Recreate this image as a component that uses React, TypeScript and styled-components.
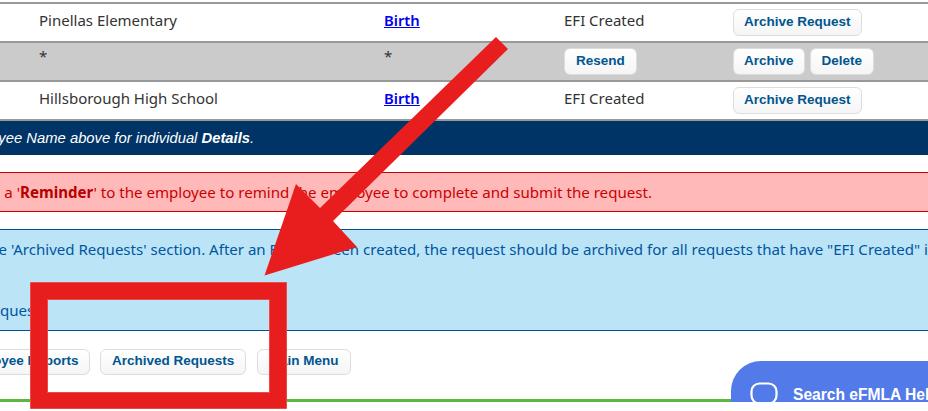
import styled, { createGlobalStyle } from "styled-components";

const GlobalStyle = createGlobalStyle`
  html, body {
    margin: 0;
    padding: 0;
    background: #fff;
    overflow: hidden;
  }
`;

const Viewport = styled.div`
  position: relative;
  width: 928px;
  height: 402px;
  overflow: hidden;
  background: #fff;
  font-family: "Noto Sans", "Open Sans", sans-serif;
  font-size: 15px;
  color: #333;
`;

// the page is scrolled sideways in the picture, so everything starts left of the window
const Page = styled.div`
  width: 1400px;
  margin-left: -200px;
  padding-top: 2px;
`;

const Table = styled.div`
  border-top: 2px solid #999;
`;

const Row = styled.div<{ $shaded?: boolean }>`
  display: grid;
  grid-template-columns: 584px 180px 169px 1fr;
  align-items: center;
  height: 37px;
  border-bottom: 2px solid #999;
  background: ${(props) => (props.$shaded ? "#cbcbcb" : "#fff")};
`;

const NameCell = styled.div`
  padding-left: 239px;
  margin-top: -5px;
`;

const Cell = styled.div`
  margin-top: -5px;
`;

const Star = styled.div`
  margin-top: -6px;
`;

const ActionCell = styled.div`
  display: flex;
  gap: 5px;
`;

const BirthLink = styled.a`
  color: #0000ee;
  font-size: 14.8px;
  font-weight: 600;
  text-decoration: underline;
`;

const Button = styled.button<{ $short?: boolean }>`
  height: 27px;
  padding: 0 ${(props) => (props.$short ? "11px" : "10px")} 3px;
  border: 1px solid #ddd;
  border-radius: 6px;
  background: linear-gradient(#fff, #f5f5f5);
  color: #00568f;
  font-family: "Liberation Sans", Arial, sans-serif;
  font-size: 13.5px;
  font-weight: bold;
  white-space: nowrap;
`;

const Banner = styled.div`
  height: 34px;
  margin-bottom: 17px;
  padding-left: 75px;
  display: flex;
  align-items: center;
  background: #003466;
  color: #fff;
  font-family: "Liberation Sans", Arial, sans-serif;
  font-size: 14.8px;
  font-style: italic;
  white-space: nowrap;
`;

const ReminderBox = styled.div`
  height: 38px;
  margin-bottom: 17px;
  padding-left: 48px;
  display: flex;
  align-items: center;
  border-top: 1px solid #cc0000;
  border-bottom: 1px solid #cc0000;
  background: #ffb9b9;
  color: #cc0000;
  font-size: 15.1px;
  white-space: nowrap;

  strong {
    font-weight: 700;
    color: #b80000;
  }
`;

const ArchiveBox = styled.div`
  height: 91px;
  margin-bottom: 18px;
  padding-top: 9px;
  border-top: 1px solid #00519b;
  border-bottom: 1px solid #00519b;
  background: #bce4f7;
  color: #00569f;
  font-size: 15.05px;
  white-space: nowrap;
`;

const ArchiveLine = styled.div<{ $indent: number }>`
  height: 30.5px;
  line-height: 21px;
  padding-left: ${(props) => props.$indent}px;
`;

const ButtonBar = styled.div`
  display: flex;
  gap: 10.5px;
  margin-left: 149px;
  height: 27px;

  ${Button} {
    height: 26px;
  }
`;

const GreenRule = styled.div`
  height: 3px;
  margin-top: 23px;
  background: #5cb83c;
`;

const HelpWidget = styled.div`
  position: absolute;
  left: 731px;
  top: 361px;
  width: 260px;
  height: 60px;
  display: flex;
  align-items: flex-start;
  gap: 15px;
  padding: 21px 0 0 19px;
  box-sizing: border-box;
  border-top-left-radius: 30px;
  background: #527be9;
  color: #fff;
  font-family: "Liberation Sans", Arial, sans-serif;
  font-size: 15.6px;
  font-weight: bold;
  white-space: nowrap;
`;

const HelpLabel = styled.span`
  margin-top: 4px;
`;

const Annotation = styled.svg`
  position: absolute;
  left: 0;
  top: 0;
  pointer-events: none;
`;

function App() {
  return (
    <>
      <GlobalStyle />
      <Viewport>
        <Page>
          <Table>
            <Row>
              <NameCell>Pinellas Elementary</NameCell>
              <Cell>
                <BirthLink href="#">Birth</BirthLink>
              </Cell>
              <Cell>EFI Created</Cell>
              <ActionCell>
                <Button>Archive Request</Button>
              </ActionCell>
            </Row>
            <Row $shaded>
              <NameCell>
                <Star>*</Star>
              </NameCell>
              <Cell>
                <Star>*</Star>
              </Cell>
              <ActionCell>
                <Button $short>Resend</Button>
              </ActionCell>
              <ActionCell>
                <Button>Archive</Button>
                <Button $short>Delete</Button>
              </ActionCell>
            </Row>
            <Row>
              <NameCell>Hillsborough High School</NameCell>
              <Cell>
                <BirthLink href="#">Birth</BirthLink>
              </Cell>
              <Cell>EFI Created</Cell>
              <ActionCell>
                <Button>Archive Request</Button>
              </ActionCell>
            </Row>
          </Table>
          <Banner>
            <span>
              Click on the Employee Name above for individual <strong>Details</strong>.
            </span>
          </Banner>
          <ReminderBox>
            <span>
              Click 'Resend' to send a '<strong>Reminder</strong>' to the employee to remind the employee to complete and submit the request.
            </span>
          </ReminderBox>
          <ArchiveBox>
            <ArchiveLine $indent={6}>
              Click 'Archive' to move to the 'Archived Requests' section. After an EFI has been created, the request should be archived for all requests that have "EFI Created" in the status column.
            </ArchiveLine>
            <ArchiveLine $indent={6} />
            <ArchiveLine $indent={136}>Delete requests</ArchiveLine>
          </ArchiveBox>
          <ButtonBar>
            <Button>Employee Reports</Button>
            <Button $short>Archived Requests</Button>
            <Button $short>Main Menu</Button>
          </ButtonBar>
          <GreenRule />
        </Page>
        <HelpWidget>
          <svg width="28" height="24" viewBox="0 0 28 24" fill="none">
            <rect x="1.5" y="1.5" width="25" height="20" rx="8" stroke="#fff" strokeWidth="2.2" />
          </svg>
          <HelpLabel>Search eFMLA Help</HelpLabel>
        </HelpWidget>
      </Viewport>
      <Annotation width="928" height="411" viewBox="0 0 928 411">
        <polygon
          points="496,37 508,49 333,221 357,247 264.5,275.5 296,184 320,208"
          fill="#e81e1e"
        />
        <path
          d="M30.5 282.5H286.5V408.5H30.5ZM47.5 299.5V392.5H269.5V299.5Z"
          fill="#e81e1e"
          fillRule="evenodd"
          stroke="#ec4a4a"
        />
      </Annotation>
    </>
  );
}

export default App;
